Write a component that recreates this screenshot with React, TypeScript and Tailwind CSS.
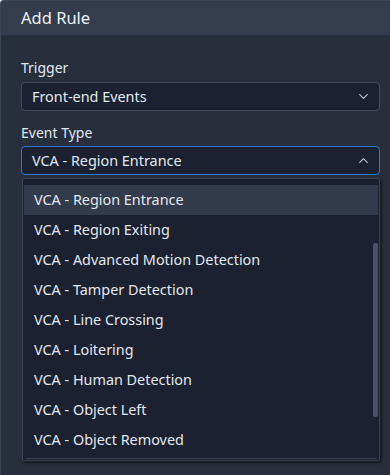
import { ChevronDown, ChevronUp } from 'lucide-react';

const EVENTS = [
  'VCA - Region Entrance',
  'VCA - Region Exiting',
  'VCA - Advanced Motion Detection',
  'VCA - Tamper Detection',
  'VCA - Line Crossing',
  'VCA - Loitering',
  'VCA - Human Detection',
  'VCA - Object Left',
  'VCA - Object Removed',
];

export default function App() {
  return (
    <div
      className="w-[390px] h-[475px] overflow-hidden bg-[#272f3d] text-[#e3e7ee] border-l border-t border-[#3c4656] rounded-tl-[4px]"
      style={{ fontFamily: '"Noto Sans", "Open Sans", sans-serif' }}
    >
      {/* Header */}
      <div className="h-[34px] bg-[#333d4e] flex items-center px-[20px]">
        <span className="text-[16.5px] text-[#eef1f5]">Add Rule</span>
      </div>

      <div className="pl-[20px] pr-[10px] pt-[23px]">
        {/* Trigger */}
        <div className="text-[14px] leading-[20px] mb-[4px]">Trigger</div>
        <div className="h-[29px] bg-[#1b2130] border border-[#434b5a] rounded-[4px] flex items-center justify-between pl-[10px] pr-[8px]">
          <span className="text-[14.4px]">Front-end Events</span>
          <ChevronDown size={15} strokeWidth={2} className="text-[#b6bcc7]" />
        </div>

        {/* Event Type */}
        <div className="text-[14px] leading-[20px] mt-[12px] mb-[3px]">Event Type</div>
        <div className="h-[29px] bg-[#1b2130] border border-[#2f79cc] rounded-[4px] flex items-center justify-between pl-[10px] pr-[8px]">
          <span className="text-[14.4px]">VCA - Region Entrance</span>
          <ChevronUp size={15} strokeWidth={2} className="text-[#b6bcc7]" />
        </div>

        {/* Dropdown */}
        <div className="relative mt-[3px] ml-[1px] h-[283px] bg-[#1b2130] border border-[#3a4352] rounded-[2px] shadow-[2px_2px_3px_rgba(0,0,0,0.45)] pt-[6px] px-[1px]">
          <div className="flex flex-col">
            {EVENTS.map((e, i) => (
              <div
                key={e}
                className={
                  'h-[30px] flex items-center pl-[10px] text-[14.4px] ' +
                  (i === 0 ? 'bg-[#323b4b]' : '')
                }
              >
                {e}
              </div>
            ))}
          </div>
          <div className="mt-[3px] mx-[2px] h-[1px] bg-[#3a4352]" />
          {/* Scrollbar */}
          <div className="absolute right-[1px] top-[64px] w-[5px] h-[174px] rounded-[2px] bg-[#4a5265]" />
        </div>
      </div>
    </div>
  );
}
